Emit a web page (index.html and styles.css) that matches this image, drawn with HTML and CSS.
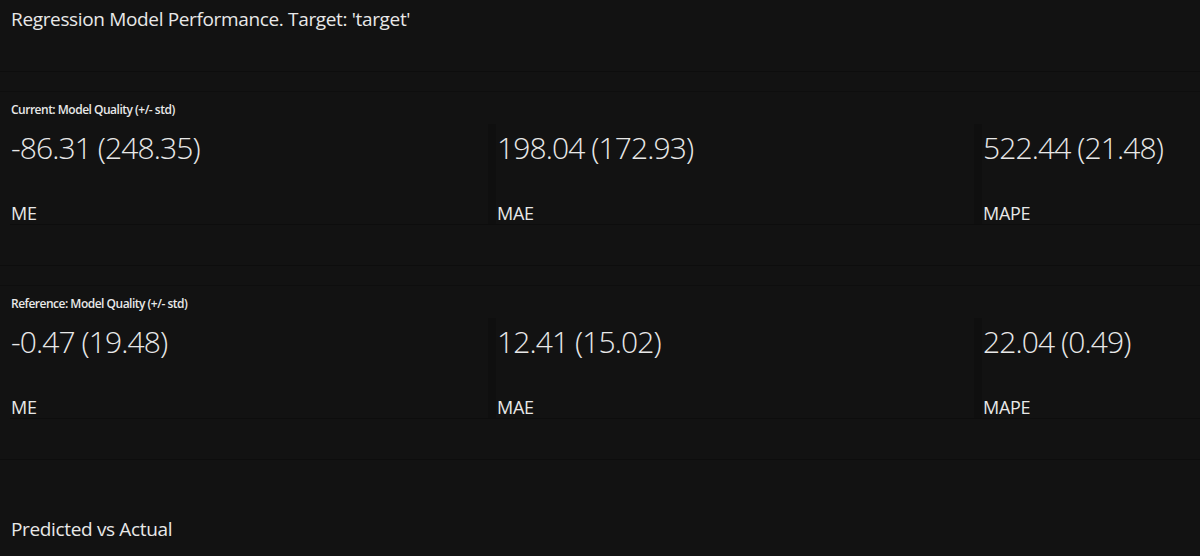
FILE: index.html
```html
<!DOCTYPE html>
<html lang="en">
<head>
    <meta charset="UTF-8">
    <title>Regression Model Performance</title>
    <meta name="viewport" content="width=device-width, initial-scale=1">
    <link rel="stylesheet" href="styles.css">
</head>
<body>
    <div class="header">
      <h1>Regression Model Performance. Target: 'target'</h1>
    </div>

    <div class="section">
      <div class="section-inner">
        <div class="caption">Current: Model Quality (+/- std)</div>
        <div class="metrics">
          <div class="cell">
            <div class="value">-86.31 (248.35)</div>
            <div class="label">ME</div>
          </div>
          <div class="cell">
            <div class="value">198.04 (172.93)</div>
            <div class="label">MAE</div>
          </div>
          <div class="cell">
            <div class="value">522.44 (21.48)</div>
            <div class="label">MAPE</div>
          </div>
        </div>
      </div>
    </div>

    <div class="section">
      <div class="section-inner">
        <div class="caption">Reference: Model Quality (+/- std)</div>
        <div class="metrics">
          <div class="cell">
            <div class="value">-0.47 (19.48)</div>
            <div class="label">ME</div>
          </div>
          <div class="cell">
            <div class="value">12.41 (15.02)</div>
            <div class="label">MAE</div>
          </div>
          <div class="cell">
            <div class="value">22.04 (0.49)</div>
            <div class="label">MAPE</div>
          </div>
        </div>
      </div>
    </div>

    <div class="section last">
      <h2>Predicted vs Actual</h2>
    </div>
</body>
</html>
```

FILE: styles.css
```css
body {
  font-family: 'Open Sans', 'Noto Sans', Arial, sans-serif;
  background: #121212;
  color: #e8e8e8;
  margin: 0;
  padding: 0;
  overflow: hidden;
}
.header {
  height: 71px;
  padding-left: 11px;
}
h1 {
  margin: 0;
  padding-top: 6px;
  font-size: 19px;
  font-weight: normal;
  line-height: 26px;
  letter-spacing: -0.35px;
}
.section {
  border-top: 1px solid #0d0d0d;
  height: 193px;
}
.section-inner {
  margin-top: 19px;
  border-top: 1px solid #0e0e0e;
  padding-left: 10px;
}
.caption {
  font-size: 12px;
  font-weight: 600;
  line-height: 14px;
  padding: 11px 0 7px 1px;
  letter-spacing: -0.5px;
}
.metrics {
  display: grid;
  grid-template-columns: 478px 478px 1fr;
  gap: 8px;
  background: #0f0f0f;
  border-bottom: 1px solid #0d0d0d;
}
.cell {
  background: #121212;
  height: 100px;
  padding: 6px 1px 0 1px;
  box-sizing: border-box;
  display: flex;
  flex-direction: column;
  justify-content: space-between;
}
.value {
  font-size: 30px;
  font-weight: 300;
  line-height: 36px;
  letter-spacing: -0.9px;
}
.label {
  font-size: 18px;
  line-height: 22px;
  letter-spacing: -0.3px;
}
.section.last {
  padding-left: 11px;
  height: auto;
}
h2 {
  margin: 0;
  padding-top: 56px;
  font-size: 19px;
  font-weight: normal;
  line-height: 26px;
  letter-spacing: -0.35px;
}
```
